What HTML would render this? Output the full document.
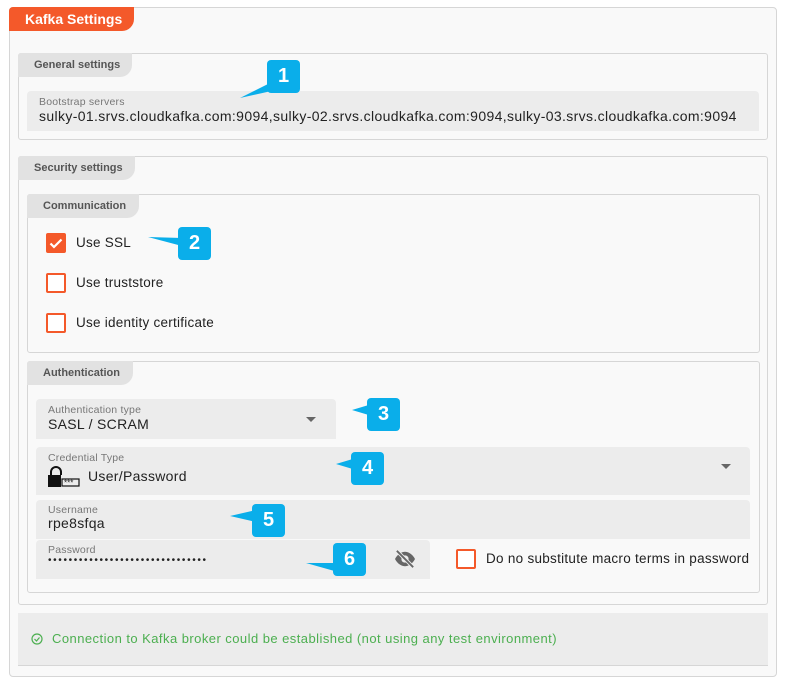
<!DOCTYPE html>
<html><head><meta charset="utf-8"><style>
*{box-sizing:border-box;margin:0;padding:0}
body{width:787px;height:684px;background:#fff;font-family:"Liberation Sans",sans-serif;position:relative;overflow:hidden;color:#222}
.a{position:absolute}
.box{position:absolute;border:1px solid #d6d6d6;border-radius:3px;background:#f9f9f9}
.tab{position:absolute;left:-1px;top:-1px;height:24px;background:#e2e2e2;border-top-left-radius:3px;border-bottom-right-radius:12px;font-size:11px;font-weight:bold;color:#555;line-height:24px;padding-left:16px}
.fld{position:absolute;background:#ececec;border-radius:4px 4px 0 0}
.lbl{position:absolute;font-size:10.5px;color:#777;letter-spacing:0.2px}
.val{position:absolute;font-size:14px;color:#222;letter-spacing:0.3px}
.cb{position:absolute;width:20px;height:20px;border:2px solid #f4592a;border-radius:2px;background:#fff}
.cbt{position:absolute;font-size:13.5px;color:#222;letter-spacing:0.25px}
.bd{position:absolute;width:33px;height:33px;background:#0aaeea;border-radius:4px;color:#fff;font-weight:bold;font-size:20px;text-align:center;line-height:33px}
</style></head><body>
<div class="box" style="left:9px;top:7px;width:768px;height:670px;border-radius:4px"></div>
<div class="a" style="left:9px;top:7px;width:125px;height:24px;background:#f4592a;border-top-left-radius:4px;border-bottom-right-radius:12px;color:#fff;font-weight:bold;font-size:14px;line-height:24px;padding-left:16px">Kafka Settings</div>

<div class="box" style="left:18px;top:53px;width:750px;height:87px"><div class="tab" style="width:114px">General settings</div></div>
<div class="fld" style="left:27px;top:91px;width:732px;height:40px"></div>
<div class="lbl" style="left:39px;top:96px">Bootstrap servers</div>
<div class="val" style="left:39px;top:108px;font-size:14px;letter-spacing:0.36px">sulky-01.srvs.cloudkafka.com:9094,sulky-02.srvs.cloudkafka.com:9094,sulky-03.srvs.cloudkafka.com:9094</div>

<div class="box" style="left:18px;top:156px;width:750px;height:449px"><div class="tab" style="width:117px">Security settings</div></div>
<div class="box" style="left:27px;top:194px;width:733px;height:159px"><div class="tab" style="width:112px">Communication</div></div>
<div class="cb" style="left:46px;top:233px;background:#f4592a"><svg width="16" height="16" viewBox="0 0 16 16" style="position:absolute;left:0;top:0"><path d="M2.5 8.5l3.5 3.5 7.5-7.5" stroke="#fff" stroke-width="2.2" fill="none"/></svg></div>
<div class="cbt" style="left:76px;top:235px">Use SSL</div>
<div class="cb" style="left:46px;top:273px"></div><div class="cbt" style="left:76px;top:275px">Use truststore</div>
<div class="cb" style="left:46px;top:313px"></div><div class="cbt" style="left:76px;top:315px">Use identity certificate</div>

<div class="box" style="left:27px;top:361px;width:733px;height:232px"><div class="tab" style="width:106px">Authentication</div></div>
<div class="fld" style="left:36px;top:399px;width:300px;height:40px"></div>
<div class="lbl" style="left:48px;top:404px">Authentication type</div>
<div class="val" style="left:48px;top:416px">SASL / SCRAM</div>
<div class="a" style="left:306px;top:417px;border:5px solid transparent;border-top-color:#666;border-bottom:0"></div>
<div class="fld" style="left:36px;top:447px;width:714px;height:48px"></div>
<div class="lbl" style="left:48px;top:452px">Credential Type</div>
<svg class="a" style="left:47px;top:466px" width="34" height="22" viewBox="0 0 34 22"><path d="M4 9V6a5 5 0 0 1 10 0v3" stroke="#111" stroke-width="2" fill="none"/><rect x="1" y="9" width="13" height="12" fill="#111"/><rect x="15" y="13" width="17" height="7" fill="none" stroke="#111" stroke-width="1.2"/><text x="17" y="19.5" font-size="8" font-family="Liberation Sans" fill="#111">***</text></svg>
<div class="val" style="left:88px;top:468px">User/Password</div>
<div class="a" style="left:721px;top:464px;border:5px solid transparent;border-top-color:#666;border-bottom:0"></div>
<div class="fld" style="left:36px;top:500px;width:714px;height:39px"></div>
<div class="lbl" style="left:48px;top:504px">Username</div>
<div class="val" style="left:48px;top:515px">rpe8sfqa</div>
<div class="fld" style="left:36px;top:540px;width:394px;height:39px"></div>
<div class="lbl" style="left:48px;top:544px">Password</div>
<div class="val" style="left:48px;top:555px;font-size:10px;letter-spacing:1.65px">•••••••••••••••••••••••••••••••</div>
<svg class="a" style="left:394px;top:549px" width="22" height="20" viewBox="0 0 24 22"><path d="M1 11c3-6 8-8 11-8s8 2 11 8c-3 6-8 8-11 8s-8-2-11-8z" fill="#666"/><circle cx="12" cy="11" r="4" fill="#ececec"/><path d="M3 2l18 18" stroke="#ececec" stroke-width="4"/><path d="M3 2l18 18" stroke="#666" stroke-width="2"/></svg>
<div class="cb" style="left:456px;top:549px"></div>
<div class="cbt" style="left:486px;top:551px;letter-spacing:0.28px">Do no substitute macro terms in password</div>

<div class="a" style="left:18px;top:613px;width:750px;height:53px;background:#ececec;border-bottom:1px solid #d6d6d6"></div>
<svg class="a" style="left:31px;top:633px" width="12" height="12" viewBox="0 0 12 12"><circle cx="6" cy="6" r="5" stroke="#4caf50" stroke-width="1.2" fill="none"/><path d="M3.5 6l2 2 3-3.5" stroke="#4caf50" stroke-width="1.2" fill="none"/></svg>
<div class="a" style="left:52px;top:631px;font-size:13px;color:#4caf50;letter-spacing:0.45px">Connection to Kafka broker could be established (not using any test environment)</div>

<svg class="a" style="left:0;top:0" width="787" height="684"><g fill="#0aaeea">
<path d="M240 98L272 82L276 90z"/><path d="M148 237L182 238L182 246z"/><path d="M352 410L372 404L372 416z"/><path d="M336 464L356 458L356 470z"/><path d="M230 516L256 510L256 522z"/><path d="M306 563L338 563L338 572z"/></g></svg>
<div class="bd" style="left:267px;top:60px">1</div>
<div class="bd" style="left:178px;top:227px">2</div>
<div class="bd" style="left:367px;top:398px">3</div>
<div class="bd" style="left:351px;top:452px">4</div>
<div class="bd" style="left:252px;top:504px">5</div>
<div class="bd" style="left:333px;top:543px">6</div>
</body></html>
